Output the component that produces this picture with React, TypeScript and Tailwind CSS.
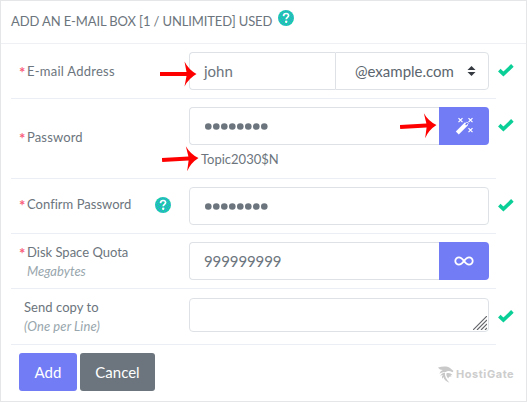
import type { ReactNode } from "react";

function Check() {
  return (
    <svg className="ml-[2px] h-[14px] w-[16px] shrink-0" viewBox="0 0 16 14">
      <path d="M1.300 7.200 5.400 11 14.400 2.400" fill="none" stroke="#0acf97" strokeWidth="3.700" />
    </svg>
  );
}

function Help() {
  return (
    <svg className="h-4 w-4 shrink-0" viewBox="0 0 16 16">
      <defs>
        <pattern id="weave" width="4" height="4" patternUnits="userSpaceOnUse">
          <rect width="4" height="4" fill="#15cdab" />
          <path d="M0 0h1v1H0zM2 1h1v1H2zM1 2h1v1H1zM3 3h1v1H3z" fill="#4596e0" />
        </pattern>
      </defs>
      <circle cx="8" cy="8" r="8" fill="url(#weave)" />
      <path d="M5.500 6.100C5.600 4.300 6.600 3.500 8.100 3.500c1.500 0 2.500.8 2.500 2.100C10.600 7.400 8.200 7.300 8.200 9.300" fill="none" stroke="#fff" strokeWidth="1.700" />
      <circle cx="8.200" cy="11.800" r="1.200" fill="#fff" />
    </svg>
  );
}

function Arrow({ place }: { place: string }) {
  return (
    <svg className={"pointer-events-none absolute h-[26px] w-[37px] " + place} viewBox="0 0 37 26">
      <path d="M0 11h26.500L24.500 0.500Q28.500 8.500 36.500 13 28.500 17.500 24.500 25.500L26.500 15H0z" fill="#fe0000" />
    </svg>
  );
}

function Row({ height, label, hint, required = true, help, checked = true, tall, spacing, hintSpacing, children }: {
  height: string; label: string; hint?: string; required?: boolean; help?: boolean; checked?: boolean; tall?: boolean;
  spacing: string; hintSpacing?: string; children: ReactNode;
}) {
  return (
    <div className={"flex " + height}>
      <div className="ml-[10px] flex w-[485px] shrink-0 border-b border-[#eceef6]">
        <div className={"flex w-[178px] shrink-0 justify-between pr-[18px] " + (tall ? "items-center" : help ? "pt-4" : hint ? "pt-[9px]" : "pt-[18px]")}>
          <div className="flex">
            {required ? <span className="w-4 pl-2 text-[15px] leading-[21px] font-bold text-[#fa5c7c]">*</span> : <span className="w-[13px]" />}
            <div className="text-[13px] leading-[19px] whitespace-nowrap">
              <div className={spacing}>{label}</div>
              {hint && <div className={"text-[13px] text-[#98a6ad] italic " + hintSpacing}>{hint}</div>}
            </div>
          </div>
          {help && <div className="pt-[2px]"><Help /></div>}
        </div>
        <div className="w-[300px] pt-2">{children}</div>
      </div>
      {checked && <div className={hint ? "pt-5" : "pt-[19px]"}><Check /></div>}
    </div>
  );
}

const field = "flex h-[38px] min-w-0 flex-1 items-center border border-[#dee2e6] pl-[14px] text-[15px]";
const dots = [0, 1, 2, 3, 4, 5, 6, 7];

function Dots() {
  return (
    <svg className="mt-[1px] ml-[1px] h-[7px] w-[64px]" viewBox="0 0 64 7" fill="#6c757d">
      {dots.map((n) => <circle key={n} cx={3.300 + n * 8} cy="3.500" r="3.300" />)}
    </svg>
  );
}

export default function App() {
  return (
    <main className="relative h-[402px] w-[527px] border border-[#e5e6e8] bg-white font-[Lato,sans-serif] text-[#6c757d]">
      <header className="flex h-[43px] items-start border-b border-[#eef0f3] pt-[9px] pl-[10px]">
        <h1 className="w-[267px] pt-[2px] text-[13px] leading-[19px] tracking-[-0.12px] whitespace-nowrap">
          <span>ADD AN E-MAIL BOX [1 / UNLIMITED] USED</span>
        </h1>
        <Help />
      </header>
      <Row height="h-[55px]" label="E-mail Address" spacing="tracking-[0.25px]">
        <div className="flex">
          <div className={field + " w-[146px] flex-none rounded-l border-r-0"}><span>john</span></div>
          <div className={field + " justify-between rounded-r pr-[12px] pl-[19px] text-[#5b656e]"}>
            <span>@example.com</span>
            <svg className="h-3 w-[9px]" viewBox="0 0 9 12"><path d="M.5 5 4.500 1l4 4zM.5 7h8l-4 4z" fill="#343a40" /></svg>
          </div>
        </div>
      </Row>
      <Row height="h-[80px]" label="Password" tall spacing="tracking-[0.15px]">
        <div className="flex">
          <div className={field + " rounded-l border-r-0"}><Dots /></div>
          <button className="flex w-[50px] items-center justify-center rounded-r bg-[#727cf5]">
            <svg className="h-[18px] w-[18px]" viewBox="0 0 18 18" fill="none">
              <path d="m2.300 16 9.200-9.200" stroke="#fff" strokeWidth="4.200" />
              <path d="m9.700 7.200 2.200-2.200 1.500 1.500-2.200 2.200z" fill="#727cf5" stroke="#fff" strokeWidth=".8" />
              <path d="m3.500 1.200 4 4m0-4-4 4m10-4 4 4m0-4-4 4m0 6 4 4m0-4-4 4" stroke="#fff" strokeWidth="1.200" />
            </svg>
          </button>
        </div>
        <div className="pt-[5px] pl-[12px] text-[13px] leading-[19px]"><span>Topic2030$N</span></div>
      </Row>
      <Row height="h-[55px]" label="Confirm Password" help spacing="tracking-[0.02px]">
        <div className="flex"><div className={field + " rounded"}><Dots /></div></div>
      </Row>
      <Row height="h-[55px]" label="Disk Space Quota" hint="Megabytes" checked={false} spacing="tracking-[0px]" hintSpacing="tracking-[0px]">
        <div className="flex">
          <div className={field + " rounded-l border-r-0"}><span className="tracking-[-0.1px]">999999999</span></div>
          <button className="flex w-[50px] items-center justify-center rounded-r bg-[#727cf5]">
            <svg className="h-[10px] w-5" viewBox="0 0 20 10"><path d="M10 5C8.200 2.500 7 1.300 5 1.300a3.700 3.700 0 0 0 0 7.400C7 8.700 8.200 7.500 10 5s3-3.700 5-3.700a3.700 3.700 0 0 1 0 7.400C13 8.700 11.800 7.500 10 5z" fill="none" stroke="#fff" strokeWidth="1.800" /></svg>
          </button>
        </div>
      </Row>
      <Row height="h-[56px]" label="Send copy to" hint="(One per Line)" required={false} spacing="tracking-[0.05px]" hintSpacing="tracking-[0.1px]">
        <div className="mt-[1px] flex h-[34px] items-end justify-end rounded border border-[#dee2e6] pr-[1px] pb-[1px]">
          <svg className="h-[14px] w-[14px]" viewBox="0 0 14 14"><path d="M0 14 14 0M4 14 14 4M8 14l6-6M12 14l2-2" stroke="#65676b" strokeWidth="1.200" /></svg>
        </div>
      </Row>
      <footer className="flex pt-2 pl-[18px]">
        <button className="h-[38px] w-[58px] rounded-[3px] bg-[#727cf5] text-[15px] text-white"><span>Add</span></button>
        <button className="ml-[3px] h-[38px] w-[75px] rounded-[3px] bg-[#6c757d] text-[15px] text-white"><span>Cancel</span></button>
        <div className="mt-3 ml-[283px] flex h-[18px] items-center font-[Inter] text-[11px] font-bold tracking-[0.55px] text-[#cdcdcd]">
          <svg className="mr-[2px] h-[17px] w-4 shrink-0" viewBox="0 0 16 17" fill="#c9c9c9">
            <path d="M0 1.500C4 .3 9-.2 12 2l3.500 3-1 1.200C12 5 9.500 4.500 7.800 6 5 6 3 6.500 1.500 8 1.800 6.200 3 4.800 4.800 4 3 4 1 3.200 0 1.500z" />
            <path d="M7 6.500C4.500 7 2.500 8.200 2.300 10.500 3 9.400 4 9 4.800 9c-1 1.200-1.100 2.500-.3 3.800.2-1 .6-1.600 1.100-1.900.2 2.300 2.200 4.200 5.800 5.800C8 13 6.500 10 7 6.500z" />
            <path d="M8.500 7.200c2.500-.7 4.500 0 6 2.100l-2-.2 1 1.500c-1.700-.3-2.700.3-3.200 1.800C8.700 11 8 9 8.500 7.200z" />
          </svg>
          <span>HostiGate</span>
        </div>
      </footer>
      <Arrow place="top-[60px] left-[159px]" />
      <Arrow place="top-[112px] left-[399px] -rotate-3" />
      <Arrow place="top-[145px] left-[161px] -rotate-3" />
    </main>
  );
}
